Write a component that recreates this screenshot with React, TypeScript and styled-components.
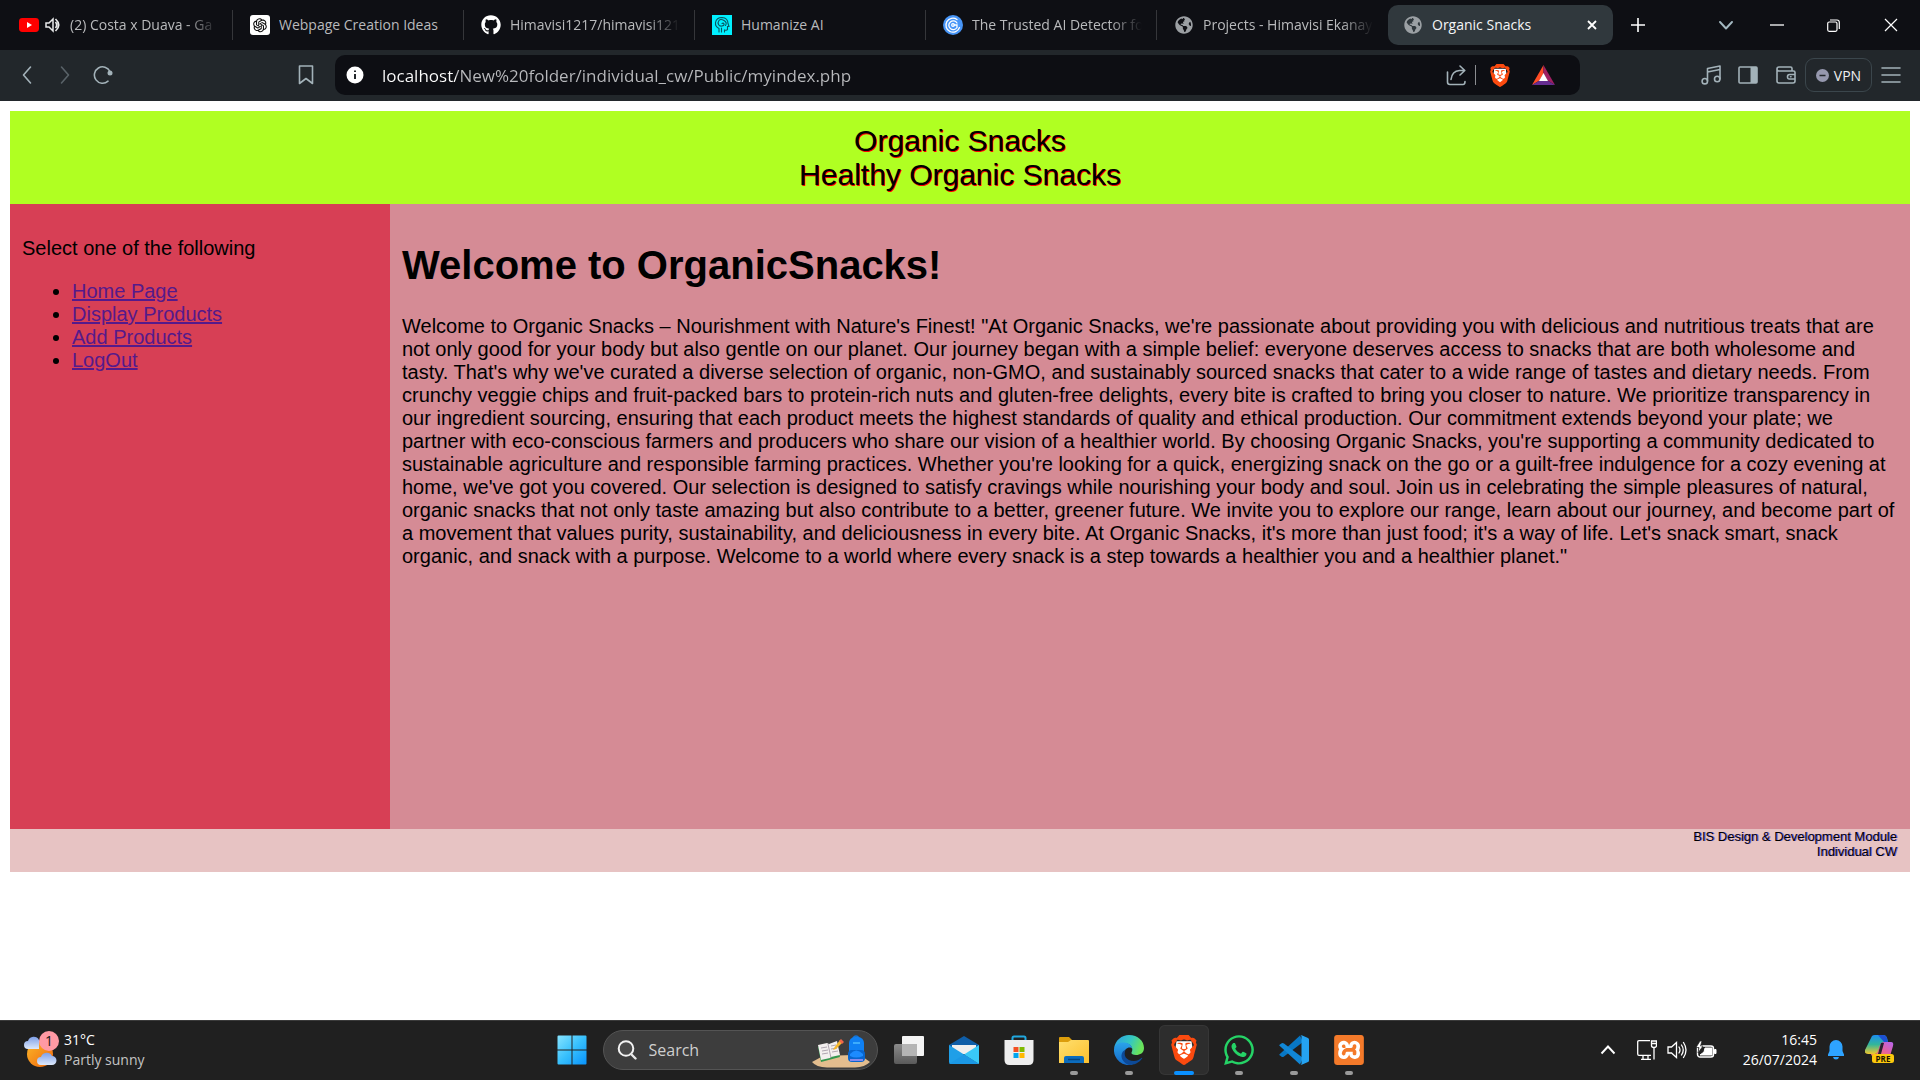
import React from "react";
import styled, { createGlobalStyle } from "styled-components";
import { FaGithub, FaGlobeAmericas, FaWhatsapp } from "react-icons/fa";
import { AiOutlineOpenAI } from "react-icons/ai";
import { SiBrave, SiXampp } from "react-icons/si";

const GlobalStyle = createGlobalStyle`
  *, *::before, *::after { box-sizing: border-box; }
  body { margin: 0; background: #fff; }
  button, input { font: inherit; color: inherit; margin: 0; padding: 0; border: 0; background: none; }
  svg { display: block; flex: none; }
`;

const uiFont = `"Open Sans", "Noto Sans", sans-serif`;
const siteFont = `"Liberation Sans", Arial, sans-serif`;

const Screen = styled.div`
  display: flex;
  flex-direction: column;
  min-height: 100vh;
  font-family: ${uiFont};
`;

/* ---------- tab strip ---------- */

const TabStrip = styled.header`
  display: flex;
  align-items: center;
  height: 50px;
  padding-left: 2px;
  background: #0e0f14;
  color: #b9babc;
  font-size: 14px;
`;

const Tabs = styled.nav`
  display: flex;
  align-items: center;
  flex: 0 1 auto;
  min-width: 0;
`;

const Tab = styled.button<{ $last?: boolean }>`
  display: flex;
  align-items: center;
  flex: 0 1 231px;
  width: 231px;
  min-width: 0;
  height: 30px;
  padding: 0 14px 0 17px;
  border-right: 1px solid ${(p) => (p.$last ? "transparent" : "#35363a")};
`;

const ActiveTab = styled.div`
  display: flex;
  align-items: center;
  flex: 0 1 225px;
  width: 225px;
  height: 40px;
  min-width: 0;
  padding: 0 12px 0 15px;
  border-radius: 10px;
  background: #30383d;
  color: #f4f5f6;
`;

const ActiveTabButton = styled.button`
  display: flex;
  align-items: center;
  flex: 1;
  min-width: 0;
`;

const TabIcon = styled.span`
  display: flex;
  width: 20px;
  height: 20px;
  align-items: center;
  justify-content: center;
  flex: none;
`;

const TabTitle = styled.span<{ $fade?: boolean }>`
  flex: 1;
  min-width: 0;
  margin-left: 9px;
  overflow: hidden;
  white-space: nowrap;
  text-align: left;
  line-height: 20px;
  mask-image: ${(p) => (p.$fade ? "linear-gradient(to left, transparent, #000 32px)" : "none")};
`;

const IconButton = styled.button<{ $w?: number }>`
  display: flex;
  align-items: center;
  justify-content: center;
  flex: none;
  width: ${(p) => p.$w ?? 38}px;
  height: 34px;
`;

const WindowControls = styled.div`
  display: flex;
  margin-left: auto;
  color: #eeeff0;
`;

/* ---------- toolbar ---------- */

const Toolbar = styled.div`
  display: grid;
  grid-template-columns: 335px minmax(0, 1fr) 340px;
  align-items: center;
  height: 51px;
  padding-bottom: 1px;
  background: #22272b;
  color: #a3b2b9;
`;

const ToolGroup = styled.div<{ $end?: boolean }>`
  display: flex;
  align-items: center;
  justify-content: ${(p) => (p.$end ? "flex-end" : "flex-start")};
  padding: ${(p) => (p.$end ? "0 10px 0 0" : "0 10px 0 8px")};

  & > :last-child { margin-left: ${(p) => (p.$end ? "0" : "auto")}; }
`;

const AddressBar = styled.div`
  display: flex;
  align-items: center;
  height: 40px;
  padding: 0 18px 0 11px;
  border-radius: 10px;
  background: #0d0e13;
`;

const AddressInput = styled.input`
  flex: 1;
  min-width: 0;
  height: 30px;
  margin-left: 18px;
  outline: 0;
  font-size: 17px;
  background: linear-gradient(to right, #fff 74px, #b9babd 74px);
  background-clip: text;
  -webkit-text-fill-color: transparent;
`;

const Divider = styled.span`
  width: 1px;
  height: 20px;
  background: #8b8d91;
`;

const VpnButton = styled.button`
  display: flex;
  align-items: center;
  justify-content: center;
  gap: 5px;
  width: 67px;
  height: 34px;
  border: 1px solid #3b464c;
  border-radius: 9px;
  color: #eff0f1;
  font-size: 14px;
`;

/* ---------- web page ---------- */

const Site = styled.div`
  flex: 1;
  padding: 10px;
  background: #fff;
  color: #000;
  font-family: ${siteFont};
  font-size: 20px;
  line-height: 23px;
`;

const Banner = styled.header`
  padding: 13px 13px 12px;
  background: #b0ff22;
  font-size: 30px;
  line-height: 34px;
  text-align: center;
  text-shadow: 1px 1px #f00;
`;

const Columns = styled.div`
  display: grid;
  grid-template-columns: 20% minmax(0, 1fr);
  min-height: 625px;
`;

const SideMenu = styled.nav`
  padding: 13px 12px;
  background: #d73f55;

  p { margin: 20px 0; }
  ul { margin: 0; padding-left: 50px; }
  a { color: #551a8b; text-decoration: underline; }
`;

const Article = styled.main`
  padding: 12px;
  background: #d58b95;

  h1 { margin: 26px 0 27px; font-size: 40px; line-height: 46px; font-weight: bold; }
  p { margin: 0; }
`;

const SiteFooter = styled.footer`
  padding: 0 13px 13px;
  background: #e7c3c3;
  font-size: 13px;
  line-height: 15px;
  text-align: right;
  text-shadow: 1px 0 rgba(0, 0, 255, 0.5);
`;

/* ---------- taskbar ---------- */

const Taskbar = styled.footer`
  display: grid;
  grid-template-columns: 1fr auto 1fr;
  align-items: center;
  height: 60px;
  box-shadow: inset 0 1px #3a3a3a;
  background: #202020;
  color: #fff;
  font-size: 14px;
  line-height: 20px;
`;

const Weather = styled.button`
  display: flex;
  align-items: center;
  justify-self: start;
  gap: 5px;
  margin-left: 23px;
  padding-bottom: 1px;
  text-align: left;
`;

const Muted = styled.span`
  color: #c4c4c4;
`;

const Lines = styled.span`
  display: flex;
  flex-direction: column;
`;

const Apps = styled.div`
  display: flex;
  align-items: center;
  gap: 5px;
`;

const AppButton = styled.button<{ $active?: boolean }>`
  display: grid;
  grid-template-rows: 1fr 4px;
  justify-items: center;
  align-items: center;
  width: 50px;
  height: 50px;
  padding: 4px 0 0;
  border-radius: 6px;
  background: ${(p) => (p.$active ? "#2d2d2d" : "none")};
  box-shadow: ${(p) => (p.$active ? "inset 0 0 0 1px #363636" : "none")};
`;

const Running = styled.span<{ $active?: boolean; $on?: boolean }>`
  width: ${(p) => (p.$active ? 20 : 8)}px;
  height: 4px;
  border-radius: 2px;
  background: ${(p) => (p.$active ? "#0a90ff" : p.$on ? "#9a9a9a" : "transparent")};
`;

const SearchBox = styled.label`
  display: flex;
  align-items: center;
  width: 275px;
  height: 40px;
  margin: 0 1px;
  padding: 0 7px 0 13px;
  border: 1px solid #545454;
  border-radius: 20px;
  background: #3d3d3d;
`;

const SearchInput = styled.input`
  flex: 1;
  min-width: 0;
  height: 30px;
  margin-left: 12px;
  outline: 0;
  font-size: 16px;

  &::placeholder { color: #cfcfcf; opacity: 1; }
`;

const Tray = styled.div`
  display: flex;
  align-items: center;
  justify-self: end;
  padding: 0 15px 1px 0;
`;

const Clock = styled.button`
  margin-left: 16px;
  text-align: right;
`;

/* ---------- drawings ---------- */

const stroke = { fill: "none", stroke: "currentColor", strokeWidth: 1.6, strokeLinecap: "round", strokeLinejoin: "round" } as const;

const YouTube = () => (
  <svg width="20" height="14" viewBox="0 0 20 14"><rect width="20" height="14" rx="3.4" fill="#f00" /><path d="M8 4v6l5-3z" fill="#fff" /></svg>
);
const TabSound = () => (
  <svg width="22" height="16" viewBox="-6 0 22 16">
    <path d="M1 6h3l4-4v12l-4-4H1z" fill="none" stroke="#e8e9ea" strokeWidth="1.5" />
    <path d="M10.500 5q2.500 3 0 6M10.500 2q6.500 6 0 12" fill="none" stroke="#e8e9ea" strokeWidth="1.7" />
  </svg>
);
const OpenAi = () => (
  <svg width="20" height="20" viewBox="0 0 20 20"><rect width="20" height="20" rx="3" fill="#fff" /><g color="#111"><AiOutlineOpenAI x="1" y="1" size={18} /></g></svg>
);
const Humanize = () => (
  <svg width="20" height="20" viewBox="0 0 20 20">
    <rect width="20" height="20" fill="#00f0ff" />
    <g fill="none" stroke="#0a5560" strokeWidth="1.1" strokeLinecap="round">
      <path d="M7 17v-3.500q-4-2-3.500-6 1-5 6.500-5 6 .5 6 6l1 3h-1.500v3q-.5 1-3 .5V17" />
      <path d="M10 8.500q1.500-1 2 .5t-2 2-3.500-1.500.5-4 5 0 1.500 5" /><path d="M9.500 13v4" />
    </g>
  </svg>
);
const Detector = () => (
  <svg width="20" height="20" viewBox="0 0 20 20">
    <circle cx="10" cy="10" r="10" fill="#4795f7" />
    <g fill="none" stroke="#fff" strokeWidth="1.3" strokeLinecap="round">
      <path d="M14 4.500a7 7 0 1 0 2.500 8" /><path d="M14 8a4.400 4.400 0 1 0 0 4.500V10h-3" /><circle cx="10" cy="10" r="1.300" />
    </g>
  </svg>
);
const BackIcon = () => <svg width="12" height="20" viewBox="0 0 12 20"><path d="M9.500 2 2.500 10l7 8" {...stroke} /></svg>;
const ForwardIcon = () => <svg width="12" height="20" viewBox="0 0 12 20"><path d="m2.500 2 7 8-7 8" {...stroke} stroke="#596268" /></svg>;
const ReloadIcon = () => (
  <svg width="20" height="20" viewBox="0 0 20 20"><path d="M15 16.200A8.200 8.200 0 1 1 17 6.500" {...stroke} /><circle cx="17" cy="8" r="2.500" fill="currentColor" /></svg>
);
const BookmarkIcon = () => <svg width="16" height="20" viewBox="0 0 16 20"><path d="M1.500 1h13v17.500l-6.500-5-6.500 5z" {...stroke} /></svg>;
const InfoIcon = () => (
  <svg width="18" height="18" viewBox="0 0 18 18"><circle cx="9" cy="9" r="8.500" fill="#fff" /><path d="M9 8v5M9 4.500v1.500" stroke="#22262a" strokeWidth="2" /></svg>
);
const ShareIcon = () => (
  <svg width="20" height="22" viewBox="0 0 20 22"><path d="M1.500 8v10q0 2.500 2.500 2.500h13q2 0 2-3" {...stroke} /><path d="M5 15.500Q6 7 13.500 6.500h5M14 2l4.800 4.500L14 11" {...stroke} /></svg>
);
const BraveLion = ({ w, h }: { w: number; h: number }) => (
  <svg width={w} height={h} viewBox="2 0 20 24">
    <path d="M6 5h12l1 7-4 7-3 2-3-2-4-7z" fill="#fff" />
    <g color="#fb4a0f"><SiBrave size={24} /></g>
  </svg>
);
const BatIcon = () => (
  <svg width="23" height="20" viewBox="0 0 23 20"><path d="M11.500 0 0 20l7.500-4.500 4-7z" fill="#ff4c24" /><path d="M11.500 0 23 20l-7.500-4.500-4-7z" fill="#9e1f63" /><path d="M0 20h23l-7.500-4.500h-8z" fill="#662d91" /><path d="m11.500 8 4.500 8H7z" fill="#fff" /></svg>
);
const MusicIcon = () => (
  <svg width="20" height="20" viewBox="0 0 20 20" {...stroke}><path d="M6.500 16V3.500L19 1v13M6.500 7 19 4.500" /><circle cx="3.800" cy="16.200" r="2.700" /><circle cx="16.200" cy="14" r="2.700" /></svg>
);
const PanelIcon = () => (
  <svg width="20" height="18" viewBox="0 0 20 18"><rect x="1" y="1" width="18" height="16" rx="1" {...stroke} /><path d="M12.500 1H19v16h-6.500z" fill="currentColor" /></svg>
);
const WalletIcon = () => (
  <svg width="20" height="18" viewBox="0 0 20 18" {...stroke}><path d="M16 4.500V2.500Q16 1 14.500 1H3Q1 1 1 3v12q0 2 2 2h14q2 0 2-2V6.500q0-1.500-1.500-1.500H3Q1.500 5 1 3.500M19 8.500h-5.500q-2 0-2 2.300t2 2.200H19M14.500 10.800h.5" /></svg>
);
const MenuIcon = () => <svg width="20" height="16" viewBox="0 0 20 16"><path d="M1 1h18M1 8h18M1 15h18" {...stroke} /></svg>;

const WeatherIcon = () => (
  <svg width="36" height="38" viewBox="0 0 36 38">
    <defs>
      <linearGradient id="sun" x1="0" y1="0" x2="1" y2="1"><stop offset="0" stopColor="#fbb829" /><stop offset="1" stopColor="#f0660c" /></linearGradient>
      <linearGradient id="cloud" x1="0" y1="0" x2="0" y2="1"><stop offset="0" stopColor="#7fa0e8" /><stop offset="1" stopColor="#dde9fb" /></linearGradient>
    </defs>
    <circle cx="17" cy="23" r="13" fill="url(#sun)" />
    <path d="M5 18a4 4 0 0 1 0-8 6 6 0 0 1 11-1v9z" fill="url(#cloud)" />
    <path d="M18 34a4 4 0 0 1 0-8 6 6 0 0 1 11-1 4.500 4.500 0 0 1 0 9z" fill="url(#cloud)" />
    <circle cx="26" cy="10" r="10" fill="#ff99a4" />
    <text x="26" y="15" textAnchor="middle" fontSize="14" fill="#161616">1</text>
  </svg>
);
const StartIcon = () => (
  <svg width="30" height="30" viewBox="0 0 30 30">
    <defs><linearGradient id="win" x1="0" y1="0" x2="1" y2="1"><stop offset="0" stopColor="#87e4ff" /><stop offset=".5" stopColor="#37c0fd" /><stop offset="1" stopColor="#0892fb" /></linearGradient></defs>
    <path d="M1.500.500H14.500V14.500H.500V1.500q0-1 1-1M15.500.500h13q1 0 1 1v13h-14zM.500 15.500h14v14h-13q-1 0-1-1zM15.500 15.500h14v13q0 1-1 1h-13z" fill="url(#win)" />
  </svg>
);
const SearchIcon = () => <svg width="20" height="20" viewBox="0 0 20 20"><circle cx="9" cy="8.500" r="7.300" fill="#4b4b4b" stroke="#f3f3f3" strokeWidth="2" /><path d="m14 14 4.500 4.500" stroke="#e8e8e8" strokeWidth="2.400" strokeLinecap="round" /></svg>;
const SchoolArt = () => (
  <svg width="58" height="36" viewBox="0 -4 58 36">
    <path d="M0 26 11 20l30-1 10 2 7 5q-5 5-15 5.500H15Q4 31 0 26" fill="#e3bd8e" />
    <path d="m6 11 18-4 4 14-19 5z" fill="#33974e" /><path d="m6 9 9-2 2 1 8-3 3 14-9 2-1 1-9 2z" fill="#f3efee" /><path d="m16 8 3 14M9 12l6-1M10 15l6-1M10 18l6-1M19 10l5-1M19 13l6-1M20 16l6-1" stroke="#9d93a0" strokeWidth=".8" />
    <path d="m22 12 6-8 3 2-7 7-3 1z" fill="#f5b62c" /><path d="m27 5 2-2 3 3-2 2z" fill="#f16649" />
    <path d="M41 2q3-4 6 0" fill="none" stroke="#1577da" strokeWidth="1.600" />
    <rect x="37" y="1" width="15" height="24" rx="6" fill="#0f80f3" /><rect x="36" y="14" width="17" height="12" rx="4" fill="#0865cf" /><path d="M38 18q6-7 13 0v2q-7 3-13 0" fill="#1c8bff" /><path d="M38 24h13" stroke="#a993f5" strokeWidth="1.600" /><path d="M41 7h7" stroke="#48b9ff" strokeWidth="1.600" />
  </svg>
);
const TaskViewIcon = () => (
  <svg width="30" height="28" viewBox="0 0 30 28"><defs><linearGradient id="tv" x1="0" y1="0" x2="0" y2="1"><stop offset="0" stopColor="#8a8a8a" /><stop offset="1" stopColor="#5a5a5a" /></linearGradient></defs><rect y="8" width="23" height="20" rx="2" fill="url(#tv)" /><rect x="8" width="22" height="20" rx="1" fill="#f4f4f4" /><path d="M8 8h15v12H8z" fill="#b5b5b5" /></svg>
);
const MailIcon = () => (
  <svg width="30" height="28" viewBox="0 0 30 28"><path d="M0 9 15 0l15 9v6H0z" fill="#0f5ea8" /><path d="M3 9h24v9H3z" fill="#efefef" /><path d="m0 9 30 19H2q-2 0-2-2z" fill="#1f9fe8" /><path d="M30 9 15 18.500 30 28z" fill="#39c9f7" /><path d="m15 18.500 15 9.500H0z" fill="#1b98e5" /></svg>
);
const StoreIcon = () => (
  <svg width="30" height="30" viewBox="0 0 30 30"><path d="M8.500 8V3q0-1.500 1.500-1.500h10q1.500 0 1.500 1.500v5" fill="none" stroke="#20a8df" strokeWidth="2" /><path d="M.500 5h29v20q0 5-5 5h-19q-5 0-5-5z" fill="#eee" /><path d="M9.500 12h5v5h-5z" fill="#f25022" /><path d="M15.500 12h5v5h-5z" fill="#7fba00" /><path d="M9.500 18h5v5h-5z" fill="#00a4ef" /><path d="M15.500 18h5v5h-5z" fill="#ffb900" /></svg>
);
const FolderIcon = () => (
  <svg width="30" height="28" viewBox="0 0 30 28"><defs><linearGradient id="fold" x1="0" y1="0" x2="1" y2="1"><stop offset="0" stopColor="#ffdf6e" /><stop offset="1" stopColor="#fcc02e" /></linearGradient></defs><path d="M0 10V2q0-1 1-1h9l3 3-2 6z" fill="#dc9d0b" /><path d="M0 6h9l3-2h17q1 0 1 1v22H0z" fill="url(#fold)" /><path d="M5 27v-5q0-2 2-2h16q2 0 2 2v5z" fill="#0c6cbd" /><path d="M9 23.500h12" stroke="#06457e" strokeWidth="1.500" /></svg>
);
const EdgeIcon = () => (
  <svg width="30" height="30" viewBox="0 0 30 30">
    <defs>
      <linearGradient id="eg" x1="0" y1="0" x2="1" y2=".3"><stop offset="0" stopColor="#2b9de8" /><stop offset=".6" stopColor="#35c8c0" /><stop offset="1" stopColor="#69e35a" /></linearGradient>
      <linearGradient id="eb" x1="0" y1="0" x2="0" y2="1"><stop offset="0" stopColor="#2aa3ea" /><stop offset="1" stopColor="#1468c8" /></linearGradient>
    </defs>
    <path d="M0 14C1 5 8 0 15 0c9 0 15 6 15 13 0 5-4 7-8 7-3 0-5-1-4.500-2.500C20 14 17 8 10 8 5 8 1 11 0 14" fill="url(#eg)" />
    <path d="M0 14C1 9 5 7.500 10 7.500c5 0 8 3 8.300 6.500-2-3-8.300-1-8.300 5 0 5 4 9 9 10.500A15 15 0 0 1 0 14" fill="url(#eb)" />
    <path d="M11.500 15C9 20 12 26 20 26c3 0 5-1 7.500-3 .8-.5 1 0 .6.500C25 28 20 30 15 30c-5-2-8-6-7.500-10 .5-3 2-4.500 4-5" fill="#0d4a98" />
  </svg>
);
const CodeIcon = () => (
  <svg width="30" height="30" viewBox="0 0 30 30"><path d="M.300 19.500 21 .500l3 6.500L5 21.500q-1.500 1-2.700 0l-2-1.500z" fill="#0877c4" /><path d="m.300 10.500 20.700 19 3-6.500L5 8.500q-1.500-1-2.700 0l-2 1.500z" fill="#1187d6" /><path d="M21 .500q.5-.8 1.700-.3L29 3q1 .500 1 1.500v21q0 1-1 1.500l-6.300 2.800q-1.200.5-1.700-.3 1.500 1 1.500-1V1.500q0-2-1.500-1" fill="#25a3f2" /></svg>
);
const XamppIcon = () => (
  <svg width="30" height="30" viewBox="0 0 30 30"><rect x="3" y="3" width="24" height="24" fill="#fff" /><g color="#f47a2a"><SiXampp size={30} /></g></svg>
);
const NetworkIcon = () => (
  <svg width="20" height="20" viewBox="0 0 20 20" fill="none" stroke="#fff" strokeWidth="1.300"><path d="M13 .700H2Q.700.700.700 2v12q0 1.300 1.300 1.300h12M6 15v4M11 15v4M4 19.300h10M17 8v11.500" /><path d="M14.500 1h5v4.500q0 2-2.500 2t-2.500-2zM14.500 3.500h5" /></svg>
);
const VolumeIcon = () => (
  <svg width="20" height="18" viewBox="0 0 20 18" fill="none" stroke="#fff" strokeWidth="1.300" strokeLinecap="round"><path d="M1 6h3.500L9.500 1.500v15L4.500 12H1zM12 6q2 3 0 6M14.500 4q3.500 5 0 10M16.500 1.500q5 7.500 0 15" /></svg>
);
const BatteryIcon = () => (
  <svg width="21" height="18" viewBox="0 0 21 18"><rect x="1.500" y="5" width="16" height="11" rx="2.500" fill="none" stroke="#fff" strokeWidth="1.400" /><path d="M9 7h7v7H4l4-3zM18.500 8.500h1.500v4h-1.500z" fill="#fff" stroke="#fff" /><path d="M4 0 0 6.500h3L2 12l5-7H4.500L6 0z" fill="#fff" stroke="#202020" strokeWidth=".7" /></svg>
);
const BellIcon = () => (
  <svg width="18" height="20" viewBox="0 0 18 20"><path d="M9 0a6.500 6.500 0 0 1 6.500 6.500V11L17 14.500V16H1v-1.500L2.500 11V6.500A6.500 6.500 0 0 1 9 0M6 17h6q-.5 2.500-3 2.500T6 17" fill="#2ea3ff" /></svg>
);
const CopilotIcon = () => (
  <svg width="30" height="30" viewBox="0 0 30 30">
    <defs>
      <linearGradient id="c1" x1="0" y1="0" x2="0" y2="1"><stop offset="0" stopColor="#1c8df0" /><stop offset=".5" stopColor="#32b69a" /><stop offset="1" stopColor="#f2c72c" /></linearGradient>
      <linearGradient id="c2" x1="1" y1="0" x2="0" y2="1"><stop offset="0" stopColor="#b466f2" /><stop offset=".5" stopColor="#e5609f" /><stop offset="1" stopColor="#ff8a53" /></linearGradient>
    </defs>
    <path d="M7 1q1-1 3-1h8q3 0 4 3l1 4h-4q-3 0-4 4l-2 6q-1 2-3 2H3q-4 0-3-4z" fill="url(#c1)" />
    <path d="M13 0h5q3 0 4 3l1 4h-4z" fill="#1d50d2" />
    <path d="M20 7h6q3 0 2 4l-3 10H8q-2 0-2-2h4q2 0 3-3l2-6q1-3 5-3" fill="url(#c2)" />
    <path d="M16 8h3l-3 11h-3z" fill="#2a2030" />
    <rect x="7" y="19" width="22" height="9" rx="2.500" fill="#fcc80d" />
    <text x="18" y="26.500" textAnchor="middle" fontSize="8" fontWeight="700" fill="#1b1500">PRE</text>
  </svg>
);

/* ---------- data ---------- */

const tabs = [
  { title: "(2) Costa x Duava - Ga", icon: <YouTube />, sound: true, fade: true },
  { title: "Webpage Creation Ideas", icon: <OpenAi /> },
  { title: "Himavisi1217/himavisi121", icon: <FaGithub size={20} color="#fff" />, fade: true },
  { title: "Humanize AI", icon: <Humanize /> },
  { title: "The Trusted AI Detector fo", icon: <Detector />, fade: true },
  { title: "Projects - Himavisi Ekanay", icon: <FaGlobeAmericas size={18} color="#9b9fa3" />, fade: true },
];

const links = ["Home Page", "Display Products", "Add Products", "LogOut"];

const apps = [
  { name: "Task view", icon: <TaskViewIcon /> },
  { name: "Mail", icon: <MailIcon /> },
  { name: "Microsoft Store", icon: <StoreIcon /> },
  { name: "File Explorer", icon: <FolderIcon />, on: true },
  { name: "Edge", icon: <EdgeIcon />, on: true },
  { name: "Brave", icon: <BraveLion w={26} h={30} />, on: true, active: true },
  { name: "WhatsApp", icon: <FaWhatsapp size={34} color="#25d366" />, on: true },
  { name: "Visual Studio Code", icon: <CodeIcon />, on: true },
  { name: "XAMPP", icon: <XamppIcon />, on: true },
];

export default function App() {
  return (
    <Screen>
      <GlobalStyle />
      <TabStrip>
        <Tabs aria-label="Tabs">
          {tabs.map((t, i) => (
            <Tab key={t.title} $last={i === tabs.length - 1}>
              <TabIcon>{t.icon}</TabIcon>
              {t.sound && <TabSound />}
              <TabTitle $fade={t.fade}>{t.title}</TabTitle>
            </Tab>
          ))}
          <ActiveTab>
            <ActiveTabButton aria-current="page">
              <TabIcon><FaGlobeAmericas size={18} color="#9ba0a4" /></TabIcon>
              <TabTitle>Organic Snacks</TabTitle>
            </ActiveTabButton>
            <IconButton $w={18} aria-label="Close tab">
              <svg width="10" height="10" viewBox="0 0 10 10"><path d="m1 1 8 8M9 1 1 9" stroke="#fff" strokeWidth="1.800" /></svg>
            </IconButton>
          </ActiveTab>
        </Tabs>
        <IconButton $w={50} aria-label="New tab">
          <svg width="14" height="14" viewBox="0 0 14 14"><path d="M7 0v14M0 7h14" stroke="#fff" strokeWidth="1.600" /></svg>
        </IconButton>
        <WindowControls>
          <IconButton $w={46} aria-label="Search tabs"><svg width="14" height="9" viewBox="0 0 14 9"><path d="m1 1 6 6.500L13 1" {...stroke} stroke="#a3b8c1" strokeWidth={1.900} /></svg></IconButton>
          <IconButton $w={56} aria-label="Minimize"><svg width="14" height="2" viewBox="0 0 14 2"><path d="M0 1h14" stroke="#fff" strokeWidth="1.300" /></svg></IconButton>
          <IconButton $w={57} aria-label="Restore"><svg width="13" height="13" viewBox="0 0 13 13" fill="none" stroke="#fff" strokeWidth="1.200"><rect x=".7" y="3" width="9.300" height="9.300" rx="1.500" /><path d="M3 1h7q2.300 0 2.300 2.300V10" /></svg></IconButton>
          <IconButton $w={58} aria-label="Close"><svg width="14" height="14" viewBox="0 0 14 14"><path d="m1 1 12 12M13 1 1 13" stroke="#fff" strokeWidth="1.200" /></svg></IconButton>
        </WindowControls>
      </TabStrip>

      <Toolbar>
        <ToolGroup>
          <IconButton aria-label="Back"><BackIcon /></IconButton>
          <IconButton aria-label="Forward"><ForwardIcon /></IconButton>
          <IconButton aria-label="Reload"><ReloadIcon /></IconButton>
          <IconButton aria-label="Bookmark"><BookmarkIcon /></IconButton>
        </ToolGroup>
        <AddressBar>
          <InfoIcon />
          <AddressInput aria-label="Address" defaultValue="localhost/New%20folder/individual_cw/Public/myindex.php" />
          <IconButton aria-label="Share"><ShareIcon /></IconButton>
          <Divider />
          <IconButton $w={48} aria-label="Brave Shields"><BraveLion w={20} h={23} /></IconButton>
          <IconButton aria-label="Brave Rewards"><BatIcon /></IconButton>
        </AddressBar>
        <ToolGroup $end>
          <IconButton $w={37} aria-label="Playlist"><MusicIcon /></IconButton>
          <IconButton aria-label="Sidebar"><PanelIcon /></IconButton>
          <IconButton aria-label="Wallet"><WalletIcon /></IconButton>
          <VpnButton>
            <svg width="13" height="13" viewBox="0 0 13 13"><circle cx="6.500" cy="6.500" r="6.500" fill="#9698ae" /><path d="M3.500 6.500h6" stroke="#22272b" strokeWidth="1.500" /></svg>
            VPN
          </VpnButton>
          <IconButton aria-label="Menu"><MenuIcon /></IconButton>
        </ToolGroup>
      </Toolbar>

      <Site>
        <Banner>Organic Snacks<br />Healthy Organic Snacks</Banner>
        <Columns>
          <SideMenu>
            <p>Select one of the following</p>
            <ul>{links.map((l) => <li key={l}><a href="#">{l}</a></li>)}</ul>
          </SideMenu>
          <Article>
            <h1>Welcome to OrganicSnacks!</h1>
            <p>
              Welcome to Organic Snacks – Nourishment with Nature's Finest! "At Organic Snacks, we're passionate about providing you with delicious and nutritious treats that are not only good for your body but also gentle on our planet. Our journey began with a simple belief: everyone deserves access to snacks that are both wholesome and tasty. That's why we've curated a diverse selection of organic, non-GMO, and sustainably sourced snacks that cater to a wide range of tastes and dietary needs. From crunchy veggie chips and fruit-packed bars to protein-rich nuts and gluten-free delights, every bite is crafted to bring you closer to nature. We prioritize transparency in our ingredient sourcing, ensuring that each product meets the highest standards of quality and ethical production. Our commitment extends beyond your plate; we partner with eco-conscious farmers and producers who share our vision of a healthier world. By choosing Organic Snacks, you're supporting a community dedicated to sustainable agriculture and responsible farming practices. Whether you're looking for a quick, energizing snack on the go or a guilt-free indulgence for a cozy evening at home, we've got you covered. Our selection is designed to satisfy cravings while nourishing your body and soul. Join us in celebrating the simple pleasures of natural, organic snacks that not only taste amazing but also contribute to a better, greener future. We invite you to explore our range, learn about our journey, and become part of a movement that values purity, sustainability, and deliciousness in every bite. At Organic Snacks, it's more than just food; it's a way of life. Let's snack smart, snack organic, and snack with a purpose. Welcome to a world where every snack is a step towards a healthier you and a healthier planet."
            </p>
          </Article>
        </Columns>
        <SiteFooter>BIS Design &amp; Development Module<br />Individual CW</SiteFooter>
      </Site>

      <Taskbar>
        <Weather>
          <WeatherIcon />
          <Lines><span>31°C</span><Muted>Partly sunny</Muted></Lines>
        </Weather>
        <Apps>
          <AppButton aria-label="Start"><StartIcon /><Running /></AppButton>
          <SearchBox>
            <SearchIcon />
            <SearchInput aria-label="Search" placeholder="Search" />
            <SchoolArt />
          </SearchBox>
          {apps.map((a) => (
            <AppButton key={a.name} aria-label={a.name} $active={a.active}>
              {a.icon}
              <Running $on={a.on} $active={a.active} />
            </AppButton>
          ))}
        </Apps>
        <Tray>
          <IconButton aria-label="Hidden icons"><svg width="16" height="10" viewBox="0 0 16 10"><path d="m1.500 8.500 6.500-7 6.500 7" fill="none" stroke="#fff" strokeWidth="1.900" /></svg></IconButton>
          <IconButton $w={40} aria-label="Network"><NetworkIcon /></IconButton>
          <IconButton $w={20} aria-label="Volume"><VolumeIcon /></IconButton>
          <IconButton $w={40} aria-label="Battery"><BatteryIcon /></IconButton>
          <Clock><Lines><span>16:45</span><span>26/07/2024</span></Lines></Clock>
          <IconButton aria-label="Notifications"><BellIcon /></IconButton>
          <IconButton $w={50} aria-label="Copilot"><CopilotIcon /></IconButton>
        </Tray>
      </Taskbar>
    </Screen>
  );
}
